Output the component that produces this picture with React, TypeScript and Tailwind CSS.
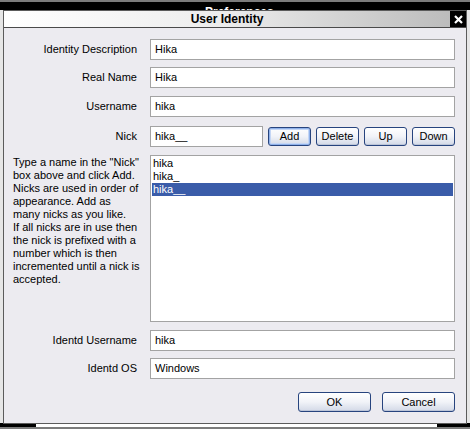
import React from 'react';

const font = "font-['Liberation_Sans',Arial,sans-serif]";

function Field({ label, value, className = '' }: { label: string; value: string; className?: string }) {
  return (
    <div className={`flex items-center ${className}`}>
      <div className="w-[134px] pr-[1px] text-right text-black">{label}</div>
      <div className="ml-[12px] flex h-[21px] flex-1 items-center border border-[#a3a3a3] bg-white pl-[4px] text-black">
        {value}
      </div>
    </div>
  );
}

function XpButton({ label, width, focused = false }: { label: string; width: string; focused?: boolean }) {
  return (
    <button
      className={`${width} h-[19px] rounded-[3px] border border-[#27447e] bg-linear-to-b from-white via-[#f1f3f8] to-[#d3d9e7] text-[11px] leading-none text-black ${
        focused ? 'shadow-[inset_0_0_0_1px_#8fb1ea,inset_0_0_0_2px_#c4d6f5]' : 'shadow-[inset_0_-1px_0_#bcc5d8]'
      }`}
    >
      {label}
    </button>
  );
}

const helpLines = [
  'Type a name in the "Nick"',
  'box above and click Add.',
  'Nicks are used in order of',
  'appearance. Add as',
  'many nicks as you like.',
  'If all nicks are in use then',
  'the nick is prefixed with a',
  'number which is then',
  'incremented until a nick is',
  'accepted.',
];

export default function App() {
  const nicks = ['hika', 'hika_', 'hika__'];
  return (
    <div className={`relative h-[429px] w-[470px] overflow-hidden bg-[#e6e6e6] ${font} text-[11px]`}>
      {/* window behind the dialog */}
      <div className="h-[2px] bg-[#7c7c7c]" />
      <div className="relative h-[8px] overflow-hidden bg-black">
        <span className="absolute left-[205px] top-[4px] text-[12px] font-bold leading-[12px] text-white">
          Preferences
        </span>
      </div>
      <div className="absolute bottom-[2px] left-0 right-0 flex h-[4px]">
        <div className="w-[36px] bg-black" />
        <div className="flex-1 border-t border-[#8a8a8a] bg-white" />
        <div className="w-[33px] bg-black" />
      </div>
      <div className="absolute bottom-0 left-0 right-0 h-[2px] bg-[#7c7c7c]" />

      {/* dialog */}
      <div className="absolute left-[3px] top-[10px] flex h-[414px] w-[464px] flex-col border border-[#5b5b5b] bg-[#ecebf0]">
        <div className="flex h-[17px] border-b border-[#4a4a4a]">
          <div className="flex flex-1 items-center justify-center bg-linear-to-r from-white via-[#ececec] to-[#bcbcbc] text-[12px] font-bold text-black">
            User Identity
          </div>
          <div className="flex w-[16px] items-center justify-center bg-black">
            <svg width="9" height="9" viewBox="0 0 9 9">
              <path d="M1 1 L8 8 M8 1 L1 8" stroke="white" strokeWidth="2.2" />
            </svg>
          </div>
        </div>

        <div className="flex flex-1 flex-col pr-[11px]">
          <Field label="Identity Description" value="Hika" className="mt-[11px]" />
          <Field label="Real Name" value="Hika" className="mt-[7px]" />
          <Field label="Username" value="hika" className="mt-[8px]" />

          <div className="mt-[9px] flex items-center">
            <div className="w-[134px] pr-[1px] text-right text-black">Nick</div>
            <div className="ml-[12px] flex h-[21px] w-[113px] items-center border border-[#a3a3a3] bg-white pl-[4px] text-black">
              hika__
            </div>
            <div className="ml-[5px] flex gap-[5px]">
              <XpButton label="Add" width="w-[43px]" focused />
              <XpButton label="Delete" width="w-[43px]" />
              <XpButton label="Up" width="w-[43px]" />
              <XpButton label="Down" width="w-[43px]" />
            </div>
          </div>

          <div className="mt-[8px] flex">
            <div className="ml-[9px] mt-[1px] w-[128px] whitespace-nowrap leading-[13px] text-black">
              {helpLines.map((l) => (
                <div key={l}>{l}</div>
              ))}
            </div>
            <div className="ml-[9px] h-[167px] flex-1 border border-[#a3a3a3] bg-white pt-[1px]">
              {nicks.map((n, i) => (
                <div
                  key={n}
                  className={`mx-[1px] h-[13px] px-[1px] leading-[13px] ${
                    i === 2 ? 'bg-[#3a5ca9] text-white' : 'text-black'
                  }`}
                >
                  {n}
                </div>
              ))}
            </div>
          </div>

          <Field label="Identd Username" value="hika" className="mt-[8px]" />
          <Field label="Identd OS" value="Windows" className="mt-[7px]" />

          <div className="mt-[13px] flex justify-end gap-[11px]">
            <XpButton label="OK" width="w-[73px] h-[20px]" />
            <XpButton label="Cancel" width="w-[73px] h-[20px]" />
          </div>
        </div>
      </div>
    </div>
  );
}
